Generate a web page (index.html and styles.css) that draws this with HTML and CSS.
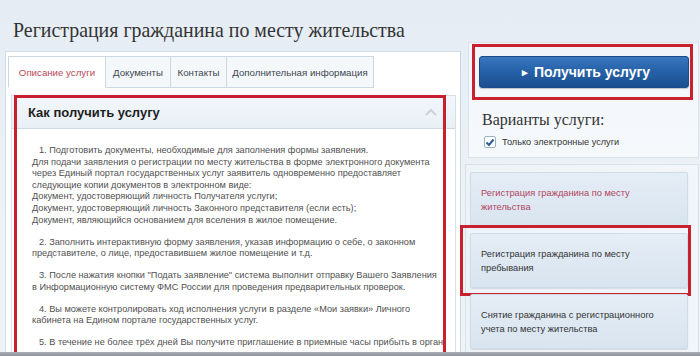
FILE: index.html
```html
<!DOCTYPE html>
<html lang="ru">
<head>
<meta charset="utf-8">
<title>Регистрация гражданина по месту жительства</title>
<link rel="stylesheet" href="styles.css">
</head>
<body>
<div class="page">
  <div class="main">
    <div class="left">
      <h1 class="title">Регистрация гражданина по месту жительства</h1>
      <div class="panel">
        <div class="tabs">
          <div class="tab active t1">Описание услуги</div>
          <div class="tab t2">Документы</div>
          <div class="tab t3">Контакты</div>
          <div class="tab t4">Дополнительная информация</div>
        </div>
        <div class="acc">
          <div class="acc-head">
            <span class="acc-title">Как получить услугу</span>
            <svg class="chev" width="12" height="8" viewBox="0 0 12 8"><path d="M1 7 L6 2 L11 7" fill="none" stroke="#c9d3dc" stroke-width="2"/></svg>
          </div>
          <div class="acc-body">
            <p><span class="ind">1. Подготовить документы, необходимые для заполнения формы заявления.</span><br>Для подачи заявления о регистрации по месту жительства в форме электронного документа<br>через Единый портал государственных услуг заявитель одновременно предоставляет<br>следующие копии документов в электронном виде:<br>Документ, удостоверяющий личность Получателя услуги;<br>Документ, удостоверяющий личность Законного представителя (если есть);<br>Документ, являющийся основанием для вселения в жилое помещение.</p>
            <p><span class="ind">2. Заполнить интерактивную форму заявления, указав информацию о себе, о законном</span><br>представителе, о лице, предоставившем жилое помещение и т.д.</p>
            <p><span class="ind">3. После нажатия кнопки "Подать заявление" система выполнит отправку Вашего Заявления</span><br>в Информационную систему ФМС России для проведения предварительных проверок.</p>
            <p><span class="ind">4. Вы можете контролировать ход исполнения услуги в разделе «Мои заявки» Личного</span><br>кабинета на Едином портале государственных услуг.</p>
            <p><span class="ind">5. В течение не более трёх дней Вы получите приглашение в приемные часы прибыть в орган</span><br>регистрационного учета для предъявления оригиналов документов и проставления в</p>
          </div>
        </div>
        <div class="mark mark-acc"></div>
      </div>
    </div>
    <div class="right">
      <div class="box">
        <button class="get"><span class="tri">&#9656;</span> Получить услугу</button>
        <div class="mark mark-btn"></div>
        <div class="variants">Варианты услуги:</div>
        <label class="check">
          <span class="cb"><svg width="10" height="9" viewBox="0 0 10 9"><path d="M1.5 4.5 L4 7 L8.5 1.5" fill="none" stroke="#2a5d9a" stroke-width="2"/></svg></span>
          Только электронные услуги
        </label>
      </div>
      <div class="list">
        <div class="item current">Регистрация гражданина по месту<br>жительства</div>
        <div class="item">Регистрация гражданина по месту<br>пребывания<div class="mark mark-item"></div></div>
        <div class="item">Снятие гражданина с регистрационного<br>учета по месту жительства</div>
      </div>
    </div>
  </div>
  <div class="bottom-bar"></div>
</div>
</body>
</html>
```
FILE: styles.css
```css
* { box-sizing: border-box; }
html, body { margin: 0; padding: 0; }
body {
  width: 700px;
  height: 356px;
  overflow: hidden;
  font-family: "Liberation Sans", Arial, sans-serif;
  background: linear-gradient(#e5ecf4, #edf2f7 60%, #eef3f8);
}
.page { display: flex; flex-direction: column; height: 356px; }
.main { display: flex; height: 352px; overflow: hidden; }
.bottom-bar { height: 4px; background: linear-gradient(#a9afb5, #8e959c); }

.left { width: 461px; padding-left: 5px; flex: none; }
.title {
  margin: 0;
  padding: 18px 0 0 8px;
  height: 51px;
  font-family: "Liberation Serif", "Times New Roman", serif;
  font-weight: normal;
  font-size: 19.9px;
  line-height: 24px;
  color: #333;
}
.panel {
  position: relative;
  background: #fff;
  border: 1px solid #d3dde7;
  border-right-color: #c9d5e0;
  padding: 4px 4px 0 2px;
  height: 320px;
}
.tabs { display: flex; height: 32px; }
.tab {
  height: 32px;
  display: flex;
  align-items: center;
  justify-content: center;
  white-space: nowrap;
  font-size: 9.7px;
  color: #3c4650;
  background: #f5f8fb;
  border: 1px solid #ccd7e1;
  border-left: none;
}
.t1 { width: 98px; border-left: 1px solid #ccd7e1; }
.t2 { width: 65px; }
.t3 { width: 56px; }
.t4 { width: 147px; }
.tab.active { background: #fff; color: #b8485a; border-bottom-color: #fff; }

.acc { margin-top: 7px; margin-left: 3px; border: 1px solid #d6e0e9; }
.acc-head {
  height: 33px;
  display: flex;
  align-items: center;
  justify-content: space-between;
  padding: 0 18px 0 16px;
  background: linear-gradient(#f3f7fb, #e8eff6);
  border-bottom: 1px solid #cfd9e3;
}
.acc-title { font-weight: bold; font-size: 13px; color: #1e1e1e; }
.acc-body {
  padding: 16px 10px 0 20px;
  font-size: 9.2px;
  line-height: 11.6px;
  color: #505050;
  white-space: nowrap;
  overflow: hidden;
}
.acc-body p { margin: 0 0 10.4px 0; }
.ind { padding-left: 7px; }

.mark { position: absolute; border: 3px solid #c8202e; pointer-events: none; }
.mark-acc { left: 8px; top: 43px; width: 432px; height: 320px; }

.right { flex: none; width: 239px; padding: 42px 0 0 7px; }
.box {
  position: relative;
  width: 231px;
  height: 116px;
  background: linear-gradient(#f1f5fa, #f6f9fc);
  border: 1px solid #d9e3ec;
  padding: 13px 0 0 10px;
}
.get {
  display: flex;
  align-items: center;
  justify-content: center;
  width: 210px;
  height: 32px;
  border: 1px solid #1c4c88;
  border-radius: 3px;
  background: linear-gradient(#3a77bf, #2560a6 50%, #1b4f90);
  color: #fff;
  font-family: "Liberation Sans", Arial, sans-serif;
  font-weight: bold;
  font-size: 14px;
  padding: 0 0 0 4px;
  box-shadow: 0 1px 1px rgba(0,0,0,0.2);
}
.tri { font-size: 11px; margin-right: 6px; }
.mark-btn { left: 3px; top: 1px; width: 221px; height: 56px; }
.variants {
  margin-top: 23px;
  margin-left: 3px;
  font-family: "Liberation Serif", "Times New Roman", serif;
  font-size: 16px;
  color: #333;
  line-height: 18px;
}
.check { display: flex; align-items: center; margin: 7px 0 0 5px; font-size: 9.2px; color: #333; }
.cb {
  width: 12px; height: 12px; margin-right: 6px;
  border: 1px solid #9eb0c3; border-radius: 2px; background: #fff;
  display: flex; align-items: center; justify-content: center;
}

.list {
  margin-top: 6px;
  margin-left: -3px;
  width: 234px;
  height: 200px;
  background: linear-gradient(90deg, #eef3f8, #f2f6fa);
  border: 1px solid #d8e2eb;
  padding: 7px 0 0 4px;
  display: flex;
  flex-direction: column;
  gap: 6px;
}
.item {
  position: relative;
  width: 218px;
  height: 55px;
  display: flex;
  align-items: center;
  padding: 0 10px 0 10px;
  white-space: nowrap;
  font-size: 9.3px;
  line-height: 14px;
  color: #333;
  background: linear-gradient(#e5edf6, #d8e4ef);
  border: 1px solid #cfdbe7;
  border-radius: 2px;
  box-shadow: 0 1px 1px rgba(120,140,160,0.25);
}
.item.current { color: #b3465e; }
.mark-item { left: -11px; top: -9px; width: 231px; height: 71px; }
```
